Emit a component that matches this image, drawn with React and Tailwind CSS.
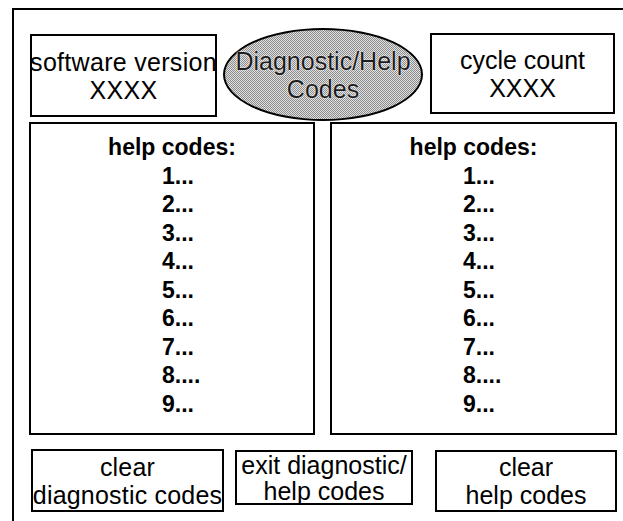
import React from "react";

const font = { fontFamily: '"Liberation Sans", Arial, sans-serif' };

function CodeList() {
  const items = ["1...", "2...", "3...", "4...", "5...", "6...", "7...", "8....", "9..."];
  return (
    <div className="w-full h-full pt-[9px] font-bold text-[23px] leading-[28.5px]">
      <div className="text-center">help codes:</div>
      <div className="pl-[131px]">
        {items.map((t) => (
          <div key={t}>{t}</div>
        ))}
      </div>
    </div>
  );
}

export default function App() {
  return (
    <div className="w-[623px] h-[521px] bg-white text-black overflow-hidden" style={font}>
      <div className="ml-[12px] mt-[8px] h-[513px] border-t-2 border-l-2 border-black flex flex-col">
        {/* top row */}
        <div className="flex items-start h-[112px] pl-[16px]">
          <div className="mt-[24px] w-[187px] h-[83px] border-2 border-black flex flex-col items-center justify-center text-[25px] leading-[28px] tracking-[0.3px] whitespace-nowrap">
            <div>software version</div>
            <div>XXXX</div>
          </div>
          <div className="ml-[6px] mt-[18px] w-[200px] h-[93px] rounded-[50%] border-2 border-black bg-[repeating-conic-gradient(#8c8c8c_0%_25%,#e0e0e0_0%_50%)] [background-size:2px_2px] flex flex-col items-center justify-center text-[25px] leading-[28px] text-[#1c1c1c] [text-shadow:0_0_1px_#ffffff,0_0_2px_#ffffff] whitespace-nowrap">
            <div>Diagnostic/Help</div>
            <div>Codes</div>
          </div>
          <div className="ml-[7px] mt-[23px] w-[185px] h-[81px] border-2 border-black flex flex-col items-center justify-center text-[25px] leading-[28px] whitespace-nowrap">
            <div>cycle count</div>
            <div>XXXX</div>
          </div>
        </div>
        {/* middle row */}
        <div className="flex pl-[15px] gap-[15px]">
          <div className="w-[286px] h-[313px] border-2 border-black">
            <CodeList />
          </div>
          <div className="w-[287px] h-[313px] border-2 border-black">
            <CodeList />
          </div>
        </div>
        {/* bottom row */}
        <div className="flex items-start mt-[14px] pl-[17px] text-[25px] whitespace-nowrap">
          <div className="w-[193px] h-[63px] border-2 border-black flex flex-col items-center justify-center leading-[28px] tracking-[0.2px]">
            <div>clear</div>
            <div>diagnostic codes</div>
          </div>
          <div className="ml-[11px] mt-[1px] w-[178px] h-[55px] border-2 border-black flex flex-col items-center justify-center leading-[26px]">
            <div>exit diagnostic/</div>
            <div>help codes</div>
          </div>
          <div className="ml-[22px] mt-[1px] w-[182px] h-[62px] border-2 border-black flex flex-col items-center justify-center leading-[28px]">
            <div>clear</div>
            <div>help codes</div>
          </div>
        </div>
      </div>
    </div>
  );
}
